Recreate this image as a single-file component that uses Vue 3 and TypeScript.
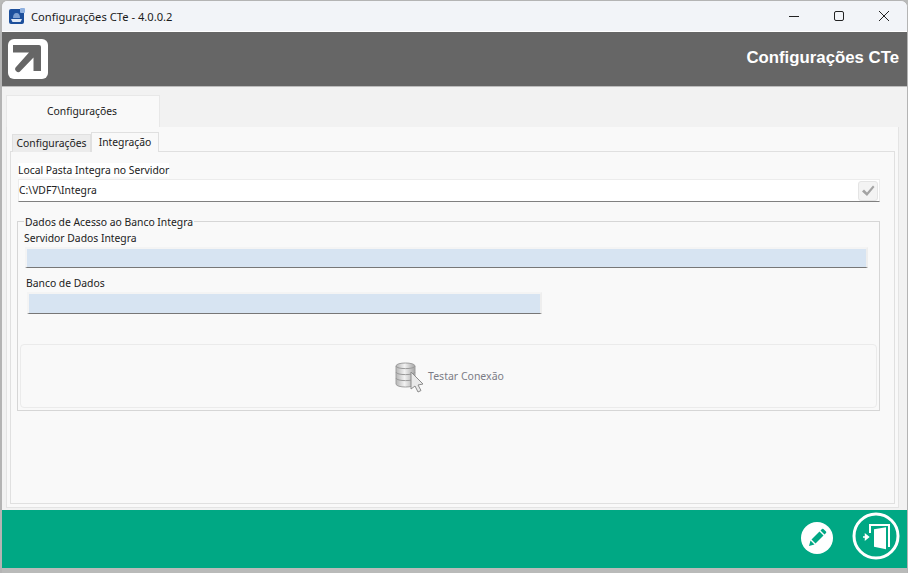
<script setup lang="ts">
const title = 'Configurações CTe'
</script>

<template>
  <div class="window">
    <div class="titlebar">
      <svg class="appicon" width="16" height="16" viewBox="0 0 16 16">
        <rect x="0" y="1" width="15" height="15" rx="2" fill="#1c4f9c" />
        <path d="M4 10c0-3 1-5 3.500-5S11 7 11 10z" fill="#7d9fd0" />
        <path d="M2 11h11l-1.500 3h-8z" fill="#dfe8f5" />
        <rect x="11" y="0" width="5" height="5" rx="1" fill="#8fb1e0" />
      </svg>
      <span class="titletext">{{ title }} - 4.0.0.2</span>
      <div class="winbtns">
        <svg width="12" height="12" viewBox="0 0 12 12"><path d="M1 6.500h10" stroke="#222" fill="none" /></svg>
        <svg width="12" height="12" viewBox="0 0 12 12"><rect x="1.500" y="1.500" width="9" height="9" rx="1.500" stroke="#222" fill="none" /></svg>
        <svg width="12" height="12" viewBox="0 0 12 12"><path d="M1 1l10 10M11 1L1 11" stroke="#222" fill="none" /></svg>
      </div>
    </div>

    <header class="header">
      <div class="logo">
        <svg width="40" height="40" viewBox="0 0 40 40">
          <rect width="40" height="40" rx="6" fill="#fff" />
          <path d="M5 6h26a2 2 0 0 1 2 2v24h-7.500V18.500L12.500 32a3 3 0 0 1-4.500-4L21 13.500H5z" fill="#666" />
        </svg>
      </div>
      <h1 class="headertitle">{{ title }}</h1>
    </header>

    <main class="body">
      <div class="outertabs"><div class="outertab">Configurações</div></div>
      <div class="outerpage">
        <div class="innertabs">
          <div class="innertab">Configurações</div>
          <div class="innertab active">Integração</div>
        </div>
        <div class="innerpage">
          <div class="label toplabel">Local Pasta Integra no Servidor</div>
          <div class="pathinput">
            <span>C:\VDF7\Integra</span>
            <span class="checkbtn">
              <svg width="14" height="12" viewBox="0 0 14 12">
                <path d="M1 6.500l2-2 3 3L12 .5l1.500 1.500L6 11z" fill="#a3a3a3" />
              </svg>
            </span>
          </div>

          <fieldset class="group">
            <legend>Dados de Acesso ao Banco Integra</legend>
            <div class="label serverlabel">Servidor Dados Integra</div>
            <div class="field serverfield"></div>
            <div class="label dblabel">Banco de Dados</div>
            <div class="field dbfield"></div>
            <div class="testbtn">
              <svg width="30" height="32" viewBox="0 0 30 32">
                <defs>
                  <linearGradient id="db" x1="0" x2="1" y1="0" y2="0">
                    <stop offset="0" stop-color="#b5b5b5" />
                    <stop offset="0.45" stop-color="#f2f2f2" />
                    <stop offset="1" stop-color="#a5a5a5" />
                  </linearGradient>
                </defs>
                <path d="M1 5c0-4 19-4 19 0v18c0 4-19 4-19 0z" fill="url(#db)" stroke="#a0a0a0" />
                <path d="M1 5c0 3.500 19 3.500 19 0M1 11c0 3.500 19 3.500 19 0M1 17c0 3.500 19 3.500 19 0" fill="none" stroke="#9a9a9a" />
                <path d="M16 11v17l4-3 3 6 3-1.500-3-5.500 5-1z" fill="#e9e9e9" stroke="#8c8c8c" />
              </svg>
              <span>Testar Conexão</span>
            </div>
          </fieldset>
        </div>
      </div>
    </main>

    <footer class="footer">
      <button class="pencil" aria-label="Editar">
        <svg width="32" height="32" viewBox="0 0 32 32">
          <circle cx="16" cy="16" r="16" fill="#fff" />
          <path d="M8 24l1.500-5.500 4 4zM10.500 17.500l8-8 4 4-8 8zM19.500 8.500l1.500-1.500a1 1 0 0 1 1.400 0l2.600 2.600a1 1 0 0 1 0 1.400l-1.500 1.500z" fill="#00a884" />
        </svg>
      </button>
      <button class="exit" aria-label="Sair">
        <svg width="48" height="48" viewBox="0 0 48 48">
          <circle cx="24" cy="24" r="22" fill="none" stroke="#fff" stroke-width="3" />
          <path d="M17 12h21v23h-2V14H19v7h-2z" fill="#fff" />
          <path d="M22 17.300l12-2v22l-12-2.600z" fill="#fff" />
          <path d="M11 25h4M13.500 22.500v5l3-2.500z" stroke="#fff" stroke-width="1.500" fill="#fff" />
        </svg>
      </button>
    </footer>
    <div class="bottomedge"></div>
  </div>
</template>

<style>
html, body { margin: 0; background: #b9bab9; }
</style>

<style scoped>
.window {
  width: 908px;
  height: 573px;
  box-sizing: border-box;
  display: flex;
  flex-direction: column;
  font-family: "Noto Sans", "Liberation Sans", sans-serif;
  font-size: 10.35px;
  color: #222;
  background: #f2f2f2;
  border-left: 2px solid #b4b4b4;
  border-right: 1px solid #b4b4b4;
  border-top: 1px solid #b4b4b4;
  border-radius: 7px 7px 0 0;
  overflow: hidden;
}
.titlebar {
  height: 30px;
  flex: none;
  display: flex;
  align-items: center;
  background: #f2f4f8;
  padding-left: 7px;
  border-bottom: 1px solid #fff;
}
.appicon { margin-right: 6px; }
.titletext { font-size: 11.2px; color: #1a1a1a; }
.winbtns {
  margin-left: auto;
  display: flex;
  gap: 33px;
  padding-right: 17px;
}
.header {
  height: 54px;
  flex: none;
  background: #666;
  display: flex;
  align-items: center;
  padding: 0 8px 0 6px;
  border-bottom: 1px solid #bdbdbd;
}
.logo { height: 40px; }
.headertitle {
  margin: 0 0 2px auto;
  font-family: "Liberation Sans", sans-serif;
  font-size: 16.8px;
  font-weight: 700;
  color: #fff;
}
.body {
  flex: 1;
  min-height: 0;
  padding: 8px 4px 0 4px;
  background: #f2f2f2;
  display: flex;
  flex-direction: column;
}
.outertabs { height: 32px; flex: none; display: flex; }
.outertab {
  width: 154px;
  box-sizing: border-box;
  background: #f9f9f9;
  border: 1px solid #e8e8e8;
  border-bottom: 0;
  display: flex;
  align-items: center;
  justify-content: center;
  padding: 0 2px 1px 0;
}
.outerpage {
  flex: 1;
  min-height: 0;
  background: #f9f9f9;
  border: 1px solid #e4e4e4;
  border-top: 0;
  padding: 5px 3px 3px 3px;
  display: flex;
  flex-direction: column;
  width: 893px;
  box-sizing: border-box;
}
.innertabs { height: 20px; flex: none; display: flex; padding-left: 2px; align-items: flex-end; position: relative; z-index: 1; margin-bottom: -1px; }
.innertab {
  height: 18px;
  box-sizing: border-box;
  width: 79px;
  background: #ececec;
  border: 1px solid #e0e0e0;
  border-bottom: 0;
  display: flex;
  align-items: center;
  justify-content: center;
  padding-bottom: 1px;
}
.innertab.active {
  height: 20px;
  width: 68px;
  background: #f9f9f9;
  padding-bottom: 2px;
}
.innerpage {
  flex: 1;
  min-height: 0;
  border: 1px solid #e0e0e0;
  background: #f9f9f9;
  padding: 11px 14px 0 7px;
}
.label { line-height: 14px; }
.toplabel { background: #fff; width: fit-content; }
.pathinput {
  margin-top: 2px;
  height: 23px;
  box-sizing: border-box;
  background: #fff;
  border: 1px solid #ececec;
  border-bottom: 1px solid #808080;
  display: flex;
  align-items: center;
  justify-content: space-between;
  padding: 0 1px 2px 0;
}
.checkbtn {
  width: 20px;
  height: 20px;
  box-sizing: border-box;
  background: #f3f3f3;
  border: 1px solid #e4e4e4;
  border-radius: 3px;
  display: flex;
  align-items: center;
  justify-content: center;
  margin-bottom: -2px;
}
.group {
  margin: 11px 0 0 -1px;
  padding: 0 3px 1px 3px;
  border: 1px solid #d6d6d6;
  height: 198px;
  box-sizing: border-box;
  min-width: 0;
}
.group legend { padding: 2px 1px 0; margin-left: 3px; line-height: 14px; }
.serverlabel { margin-top: 2px; padding-left: 3px; }
.field {
  height: 21px;
  box-sizing: border-box;
  background: #d7e4f2;
  border: 2px solid #f4f4f4;
  border-bottom: 1px solid #777;
  border-right-color: #eee;
}
.serverfield { margin: 2px 8px 0 4px; }
.dblabel { margin-top: 8px; padding-left: 5px; }
.dbfield { margin: 2px 0 0 6px; width: 515px; height: 22px; }
.testbtn {
  margin: 30px -1px 0;
  height: 64px;
  box-sizing: border-box;
  border: 1px solid #ebebeb;
  border-radius: 4px;
  display: flex;
  align-items: center;
  justify-content: center;
  gap: 3px;
  color: #7c7c86;
  font-size: 10.5px;
}
.testbtn svg { margin-left: 2px; margin-top: 2px; }
.footer {
  height: 58px;
  flex: none;
  margin-top: 2px;
  background: #00a884;
  display: flex;
  align-items: center;
  justify-content: flex-end;
  padding-right: 7px;
  gap: 19px;
}
.footer button { padding: 0; margin: 0; border: 0; background: none; display: flex; }
.footer .exit { margin-bottom: 6px; }
.footer .pencil { margin-bottom: 3px; }
.bottomedge { height: 5px; flex: none; background: #b9bab9; }
</style>
